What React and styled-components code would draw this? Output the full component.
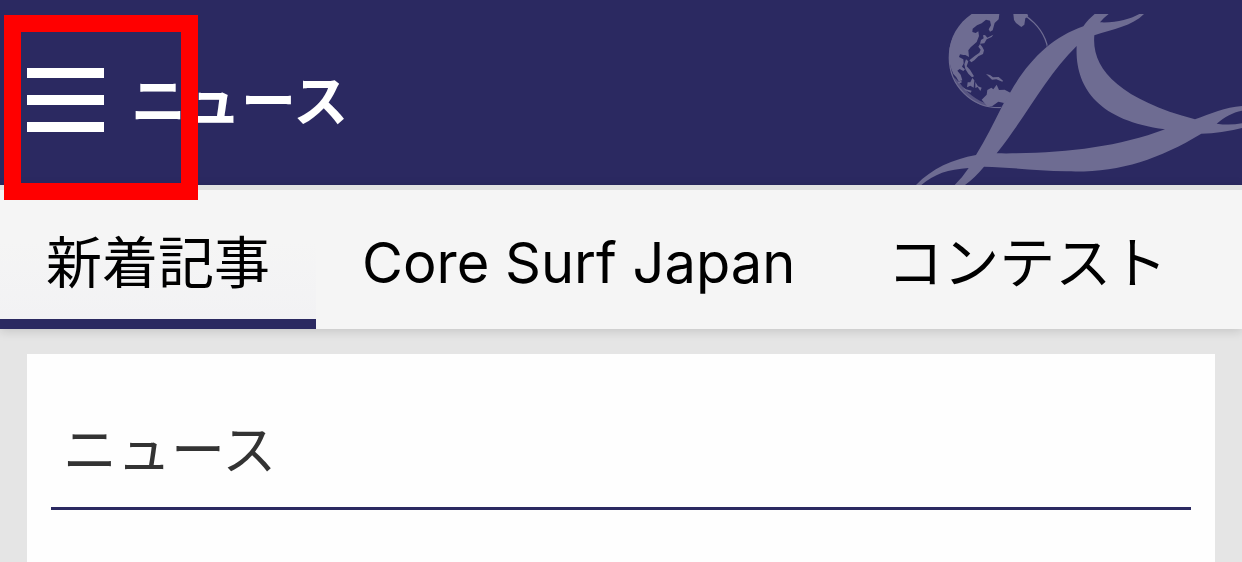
import React from "react";
import styled, { createGlobalStyle } from "styled-components";

const navy = "#2b2961";

const GlobalStyle = createGlobalStyle`
  * { box-sizing: border-box; }
  body {
    margin: 0;
    background: #e5e5e5;
    font-family: Inter, "Noto Sans CJK JP", sans-serif;
    color: #000;
    overflow-x: hidden;
  }
`;

const Header = styled.header`
  position: relative;
  display: flex;
  align-items: center;
  height: 185px;
  padding: 14px 0 0 27px;
  background: ${navy};
`;

const MenuButton = styled.button`
  display: flex;
  flex-direction: column;
  gap: 17px;
  width: 77px;
  padding: 0;
  border: 0;
  background: none;
  cursor: pointer;
`;

const Bar = styled.span`
  height: 10px;
  background: #fff;
`;

const HeaderTitle = styled.h1`
  margin: 0;
  padding: 3px 0 0 27px;
  font-size: 55px;
  line-height: 64px;
  font-weight: 700;
  color: #fff;
`;

const Highlight = styled.div`
  position: absolute;
  z-index: 2;
  left: 4px;
  top: 15px;
  width: 194px;
  height: 185px;
  border: 17px solid #f00;
  pointer-events: none;
`;

const Logo = styled.svg`
  flex: none;
  align-self: flex-end;
  width: 342px;
  height: 171px;
  margin-left: auto;
`;

const Tabs = styled.nav`
  position: relative;
  display: flex;
  height: 144px;
  border-top: 5px solid #e2e2e2;
  background: #f5f5f5;
  box-shadow: 0 2px 10px rgba(0, 0, 0, 0.15);
`;

const Tab = styled.a`
  flex: none;
  padding: 31px 46px 0;
  border-bottom: 10px solid ${(p) => (p.$active ? navy : "transparent")};
  background: ${(p) => (p.$active ? "linear-gradient(#f5f5f5 40%, #f2f2f4) padding-box" : "none")};
  font-size: 56px;
  line-height: 84px;
  color: #000;
  text-decoration: none;
  white-space: nowrap;
`;

const Card = styled.main`
  min-height: 208px;
  margin: 25px 27px 0;
  padding: 57px 24px 0;
  background: #fefefe;
`;

const CardTitle = styled.h2`
  margin: 0;
  padding: 0 12px 16px;
  border-bottom: 3px solid ${navy};
  font-size: 54px;
  line-height: 80px;
  font-weight: 400;
  color: #333;
`;

function SurfLogo() {
  return (
    <Logo viewBox="0 42 1026 513" fill="#6e6c92" aria-hidden="true">
      <path
        fillRule="evenodd"
        d="M48 555C96 505 158 478 228 465C256 420 280 370 304 323L330 278C385 182 455 112 550 79C560 64 572 52 584 42H626Q610 54 600 67C650 69 688 58 718 42H732C696 79 640 86 583 106C574 205 655 296 885 358C932 341 975 322 1026 318V332C998 337 972 352 950 371Q988 377 1026 370V384Q965 400 904 401C770 482 650 519 500 514C410 513 330 501 252 500Q226 532 195 555H164Q187 533 206 504C145 508 102 522 64 555ZM530 138C440 225 378 350 290 460C475 462 643 445 795 388C592 362 524 260 530 138Z"
      />
      <clipPath id="rim">
        <path d="M140 42H460V132H445L410 200L300 326H140Z" />
      </clipPath>
      <circle cx="297" cy="174" r="149" fill="none" stroke="#6e6c92" strokeWidth="4" clipPath="url(#rim)" />
      <path d="M215 42H298L296 58L284 69L278 91L270 95L266 88L273 76L270 62L258 59L245 70L231 76L218 86L217 96L227 99L235 94L237 108L230 126L212 142L205 151L207 171L196 165L190 165L180 163L177 171L190 178L191 190L186 200L195 208L190 213L179 207L172 212L182 224L187 241L176 244L169 232L160 222C151 204 147 184 147 163C149 112 174 70 215 42Z" />
      <path d="M340 42H382L385 49L376 55L373 74L364 81L348 69L342 60Z" />
      <path d="M280 104L275 111L260 118L253 130L240 131L243 120L251 115L249 106L255 105L262 113Z" />
      <path d="M240 132L247 141L252 151L249 162L235 169L223 181L214 187L208 181L224 168L238 158L242 149L235 140Z" />
      <path d="M198 178L205 184L200 199L210 209L222 229L216 232L205 221L196 207L193 193Z" />
      <path d="M258 222L270 225L279 232L296 231L309 242L307 245L289 238L276 239Z" />
      <path d="M217 234L223 241L221 263L211 257L201 262L203 247L211 247Z" />
      <path d="M226 246L234 259L245 263L241 273L233 261L226 264Z" />
      <path d="M173 246L183 242L186 247L176 251ZM188 261L198 268L215 272L212 278L195 271Z" />
      <path d="M245 299L260 284L262 270L274 263L280 268L290 254L297 270L314 269L334 280L304 323L312 309L295 305L276 319L262 319Z" />
      <path d="M161 230C178 274 216 312 269 321L268 314C227 301 199 276 177 246Z" opacity=".65" />
    </Logo>
  );
}

export default function App() {
  return (
    <div lang="ja">
      <GlobalStyle />
      <Header>
        <MenuButton type="button" aria-label="メニュー">
          <Bar />
          <Bar />
          <Bar />
        </MenuButton>
        <HeaderTitle>ニュース</HeaderTitle>
        <SurfLogo />
        <Highlight />
      </Header>
      <Tabs>
        <Tab href="#new" $active aria-current="page">新着記事</Tab>
        <Tab href="#core">Core Surf Japan</Tab>
        <Tab href="#contest">コンテスト</Tab>
      </Tabs>
      <Card>
        <CardTitle>ニュース</CardTitle>
      </Card>
    </div>
  );
}
